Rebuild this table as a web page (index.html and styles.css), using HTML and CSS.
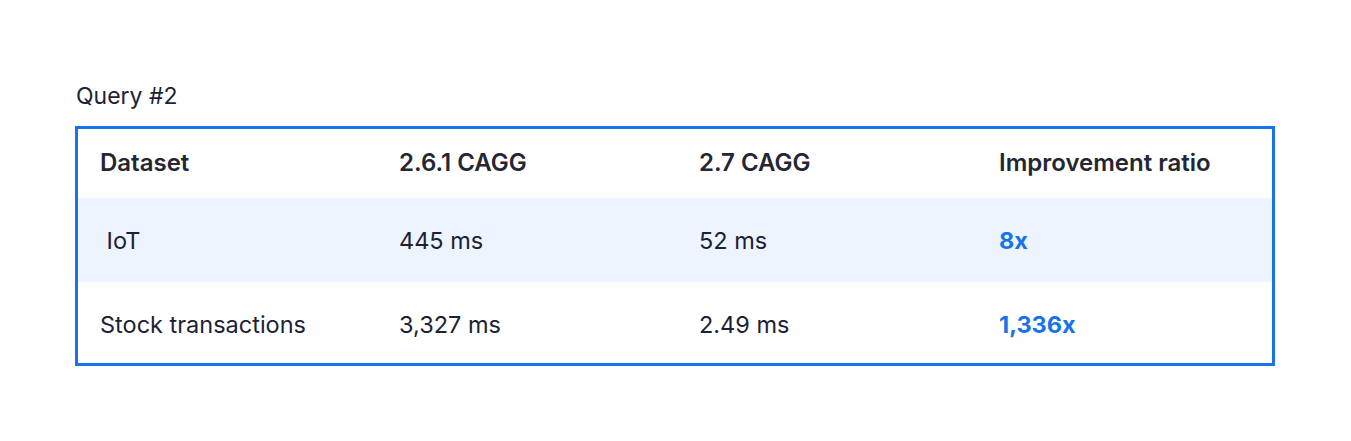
FILE: index.html
```html
<!DOCTYPE html>
<html lang="en">
<head>
    <meta charset="UTF-8">
    <title>Query #2</title>
    <link rel="stylesheet" href="styles.css">
</head>
<body>
    <div class="container">
        <p class="caption">Query #2</p>
        <div class="table-box">
            <table class="results">
                <thead>
                    <tr>
                        <th>Dataset</th>
                        <th>2.6.1 CAGG</th>
                        <th>2.7 CAGG</th>
                        <th class="wide">Improvement ratio</th>
                    </tr>
                </thead>
                <tbody>
                    <tr class="shaded">
                        <td>&nbsp;IoT</td>
                        <td>445 ms</td>
                        <td>52 ms</td>
                        <td class="ratio">8x</td>
                    </tr>
                    <tr class="last">
                        <td>Stock transactions</td>
                        <td>3,327 ms</td>
                        <td>2.49 ms</td>
                        <td class="ratio">1,336x</td>
                    </tr>
                </tbody>
            </table>
        </div>
    </div>
</body>
</html>
```

FILE: styles.css
```css
body {
    margin: 0;
    background: #ffffff;
    font-family: 'Inter', sans-serif;
    color: #1c2233;
}

.container {
    padding: 81px 0 0 75px;
}

.caption {
    margin: 0 0 15px 1px;
    font-size: 23px;
    line-height: 30px;
}

.table-box {
    box-sizing: border-box;
    width: 1200px;
    border: 3px solid #1873eb;
}

.results {
    width: 100%;
    border-collapse: collapse;
    table-layout: fixed;
}

.results th,
.results td {
    box-sizing: border-box;
    width: 300px;
    padding: 0 0 0 21px;
    text-align: left;
}

.results th:first-child,
.results td:first-child {
    padding-left: 22px;
}

.results th.wide {
    width: auto;
}

.results th {
    height: 69px;
    padding-bottom: 2px;
    font-size: 24px;
    font-weight: 600;
    color: #242631;
}

.results td {
    height: 84px;
    font-size: 23.5px;
}

.results .last td {
    height: 81px;
    padding-top: 4px;
}

.shaded {
    background: #eef4fe;
}

.ratio {
    color: #1873eb;
    font-weight: 700;
}
```
